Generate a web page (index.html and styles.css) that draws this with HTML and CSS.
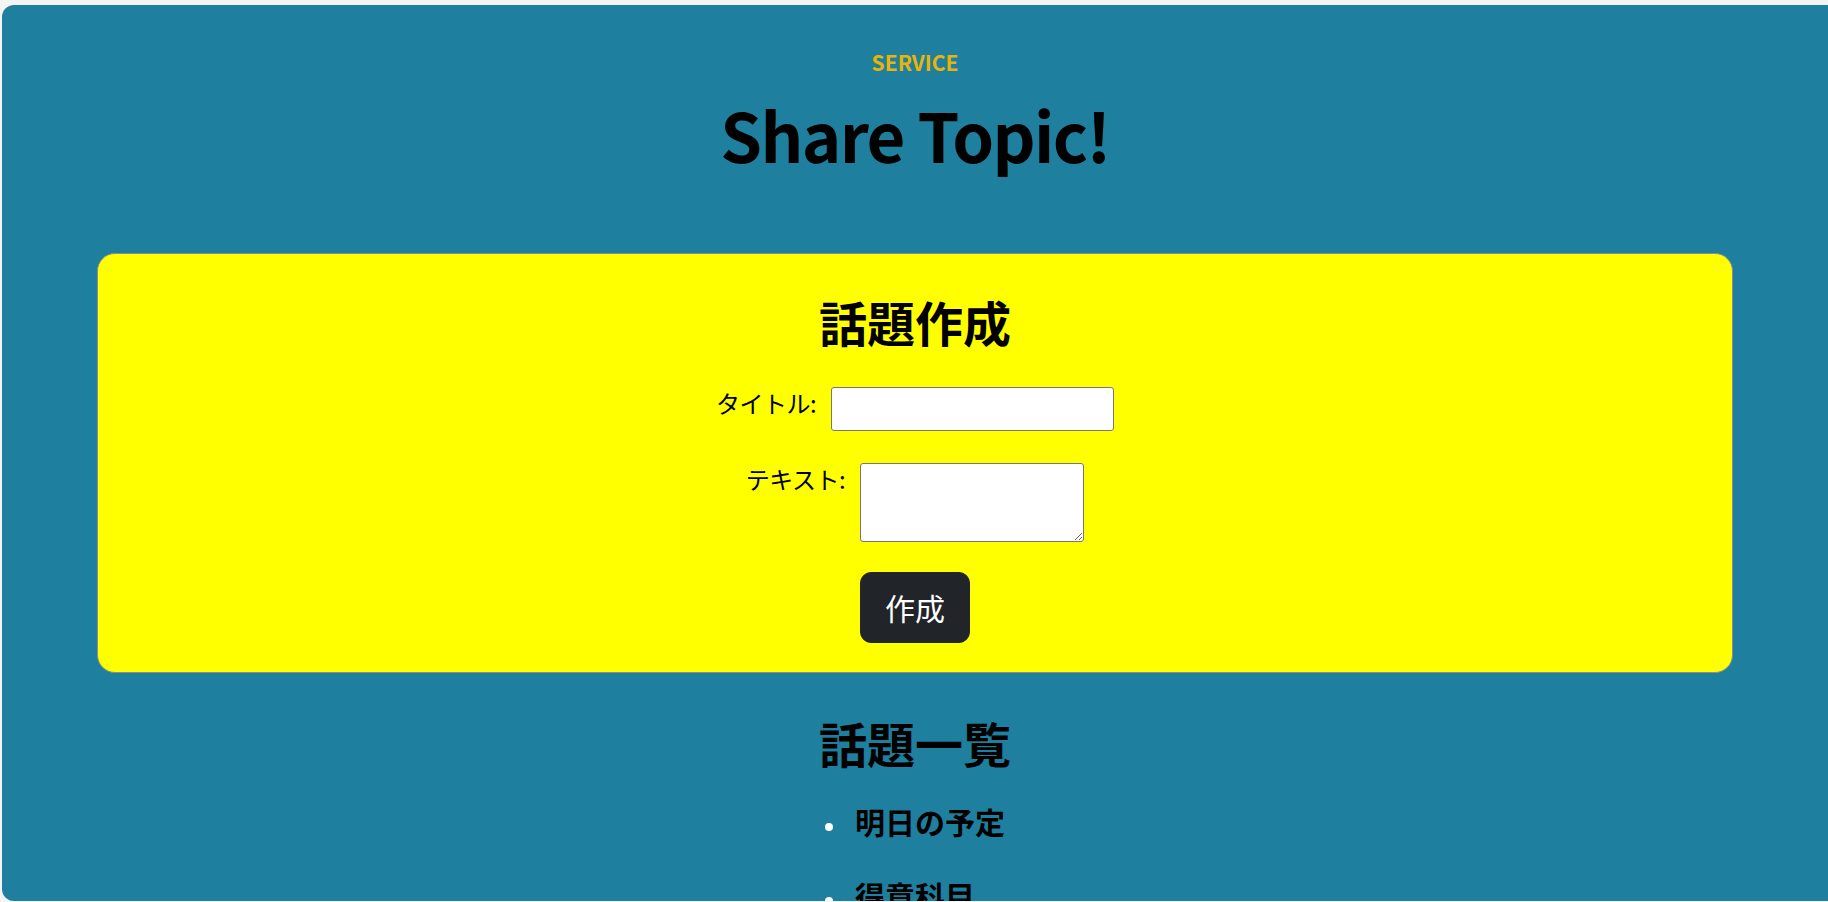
FILE: index.html
```html
<!DOCTYPE html>
<html lang="ja">
<head>
<meta charset="utf-8">
<title>Share Topic!</title>
<link rel="stylesheet" href="styles.css">
</head>
<body>
<main class="frame">
  <header class="hero">
    <p class="eyebrow">SERVICE</p>
    <h1 class="title">Share Topic!</h1>
  </header>
  <section class="card">
    <h2 class="section-title">話題作成</h2>
    <form class="form">
      <div class="field-row">
        <label class="field-label" for="title">タイトル:</label>
        <input class="field-input" id="title" type="text">
      </div>
      <div class="field-row field-row-text">
        <label class="field-label" for="text">テキスト:</label>
        <textarea class="field-textarea" id="text"></textarea>
      </div>
      <button class="btn" type="button">作成</button>
    </form>
  </section>
  <section class="topics">
    <h2 class="section-title">話題一覧</h2>
    <ul class="topic-list">
      <li class="topic-item"><span class="bullet"></span><span class="topic-name">明日の予定</span></li>
      <li class="topic-item"><span class="bullet"></span><span class="topic-name">得意科目</span></li>
    </ul>
  </section>
</main>
</body>
</html>
```
FILE: styles.css
```css
html {
  overflow: hidden;
}
body {
  margin: 0;
  background: #f4f4f4;
  font-family: "Noto Sans CJK JP", "Noto Sans", sans-serif;
  color: #000;
}
.frame {
  margin: 5px 0 0 2px;
  width: calc(100vw - 2px);
  height: 896px;
  box-sizing: border-box;
  background: #1e809e;
  border-radius: 12px 0 0 12px;
  overflow: hidden;
  padding-top: 46px;
  display: flex;
  flex-direction: column;
  align-items: center;
}
.hero {
  display: flex;
  flex-direction: column;
  align-items: center;
}
.eyebrow {
  margin: 0;
  font-size: 21px;
  line-height: 22px;
  font-weight: 700;
  color: #eab308;
}
.title {
  margin: 27px 0 0;
  font-size: 67px;
  line-height: 67px;
  font-weight: 700;
  letter-spacing: -1.6px;
}
.card {
  box-sizing: border-box;
  align-self: stretch;
  margin: 86px 95px 0 95px;
  background: #ffff00;
  border: 1px solid #8c8c8c;
  border-radius: 18px;
  padding: 39px 0 29px;
  display: flex;
  flex-direction: column;
  align-items: center;
}
.section-title {
  margin: 0;
  font-size: 48px;
  line-height: 57.6px;
  font-weight: 700;
}
.form {
  display: flex;
  flex-direction: column;
  align-items: center;
  margin-top: 36px;
}
.field-row {
  display: flex;
  align-items: flex-start;
  gap: 15px;
}
.field-row-text {
  margin-top: 32px;
}
.field-label {
  font-size: 24px;
  line-height: 36px;
  margin-top: -2px;
  letter-spacing: -0.5px;
}
.field-input {
  box-sizing: border-box;
  width: 283px;
  height: 44px;
  margin: 0;
  border: 1px solid #767676;
  border-radius: 3px;
  background: #fff;
  font-size: 20px;
}
.field-textarea {
  box-sizing: border-box;
  width: 224px;
  height: 79px;
  margin: 0;
  border: 1px solid #767676;
  border-radius: 3px;
  background: #fff;
  font-size: 20px;
}
.btn {
  margin-top: 30px;
  box-sizing: border-box;
  width: 110px;
  height: 71px;
  border: 1px solid #212529;
  border-radius: 11px;
  background: #212529;
  color: #fff;
  font-family: "Noto Sans CJK JP", sans-serif;
  font-size: 30px;
  line-height: 45px;
  padding: 0;
}
.topics {
  margin-top: 41px;
  display: flex;
  flex-direction: column;
  align-items: center;
}
.topic-list {
  list-style: none;
  margin: 32px 0 0;
  padding: 0;
  display: flex;
  flex-direction: column;
  gap: 38px;
}
.topic-item {
  display: flex;
  align-items: flex-start;
  font-size: 30px;
  line-height: 36px;
  font-weight: 700;
}
.bullet {
  width: 8px;
  height: 8px;
  border-radius: 50%;
  background: #fff;
  margin: 20px 22px 0 0;
  flex: none;
}
```
